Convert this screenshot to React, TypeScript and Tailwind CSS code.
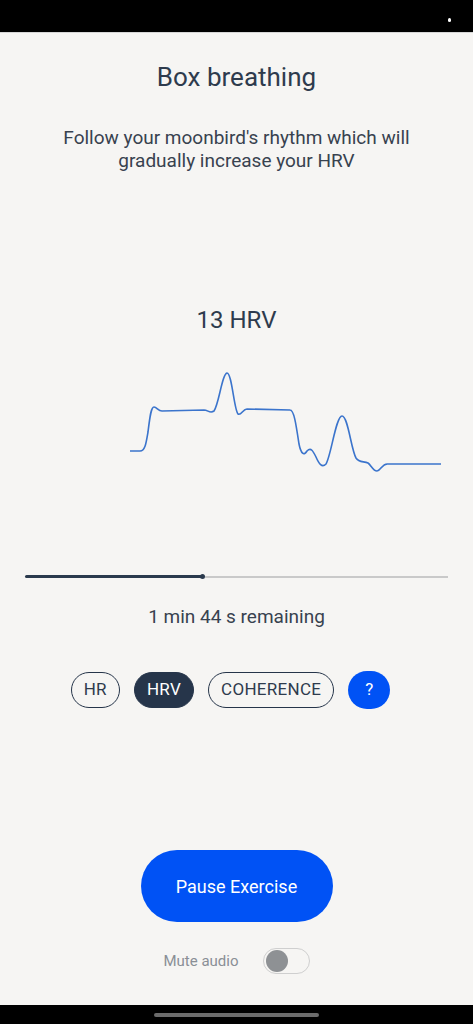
import { useState } from "react"

const font = { fontFamily: "Roboto, 'Liberation Sans', sans-serif" }

const chartPath =
  "M130 107 L140 107 C145 107 146 100 148 88 C150 72 151 63 154 63 C157 63 158 67 162 67 L204 66 C208 66 210 70 214 67 C219 60 222 30 227 29 C232 29 234 66 238 70 C241 72 243 65 247 65 L290 66 C294 66 296 80 299 100 C301 110 304 112 307 107 C311 103 313 107 316 113 C319 120 322 124 326 120 C331 112 336 72 342 72 C348 72 351 105 356 114 C359 119 364 117 368 119 C371 121 373 127 377 127 C381 127 382 119 388 120 L441 120"

function Chip({ label, active }: { label: string; active?: boolean }) {
  return (
    <div
      className={
        active
          ? "h-[36px] px-[12px] rounded-full bg-[#26354a] border border-[#26354a] text-white flex items-center text-[17px] tracking-[0.3px]"
          : "h-[36px] px-[12px] rounded-full border border-[#26354a] text-[#2e3b4d] flex items-center text-[17px] tracking-[0.3px]"
      }
    >
      {label}
    </div>
  )
}

export default function App() {
  const [muted, setMuted] = useState(false)

  return (
    <div className="w-[473px] h-[1024px] bg-[#f6f5f3] flex flex-col overflow-hidden" style={font}>
      <div className="h-[33px] bg-black flex justify-end items-center pr-[22px] border-b border-[#d6d6d6]">
        <div className="w-[3px] h-[4px] bg-white rounded-sm mt-[8px]" />
      </div>

      <h1 className="mt-[27px] text-center text-[26px] leading-[34px] text-[#2e3b4d]">Box breathing</h1>

      <p className="mt-[32px] text-center text-[19px] leading-[23px] text-[#38424f]">
        Follow your moonbird's rhythm which will
        <br />
        gradually increase your HRV
      </p>

      <div className="mt-[133px] text-center text-[24px] leading-[30px] text-[#2e3b4d]">13 HRV</div>

      <svg className="mt-[9px] block" width="473" height="135" viewBox="0 0 473 135">
        <path d={chartPath} fill="none" stroke="#3b74cc" strokeWidth="1.6" strokeLinejoin="round" />
      </svg>

      <div className="mt-[95px] mx-[25px] flex items-center">
        <div className="h-[3px] w-[177px] bg-[#2b3a4d] rounded-l-full" />
        <div className="w-[5px] h-[5px] rounded-full bg-[#2b3a4d] -ml-[2px]" />
        <div className="h-[2px] flex-1 bg-[#c9c9c9]" />
      </div>

      <div className="mt-[26px] text-center text-[19px] leading-[24px] text-[#38424f]">1 min 44 s remaining</div>

      <div className="mt-[42px] flex justify-center items-center gap-[14px] pr-[12px]">
        <Chip label="HR" />
        <Chip label="HRV" active />
        <Chip label="COHERENCE" />
        <div className="w-[42px] h-[38px] rounded-full bg-[#0052f5] text-white flex items-center justify-center text-[17px]">
          ?
        </div>
      </div>

      <div className="mt-[141px] flex justify-center">
        <button className="w-[192px] h-[72px] rounded-full bg-[#0052f5] text-white text-[18px]">Pause Exercise</button>
      </div>

      <div className="mt-[26px] flex justify-center items-center gap-[24px]">
        <span className="text-[15px] text-[#8a8f96]">Mute audio</span>
        <button
          onClick={() => setMuted(!muted)}
          className="w-[47px] h-[26px] rounded-full border border-[#cfcfcf] bg-[#f6f5f3] flex items-center px-[2px]"
        >
          <div className={muted ? "w-[22px] h-[22px] rounded-full bg-[#0052f5] ml-auto" : "w-[22px] h-[22px] rounded-full bg-[#8e9194]"} />
        </button>
      </div>

      <div className="mt-auto h-[19px] bg-black flex justify-center items-center">
        <div className="w-[165px] h-[4px] rounded-full bg-[#6b6b6b]" />
      </div>
    </div>
  )
}
